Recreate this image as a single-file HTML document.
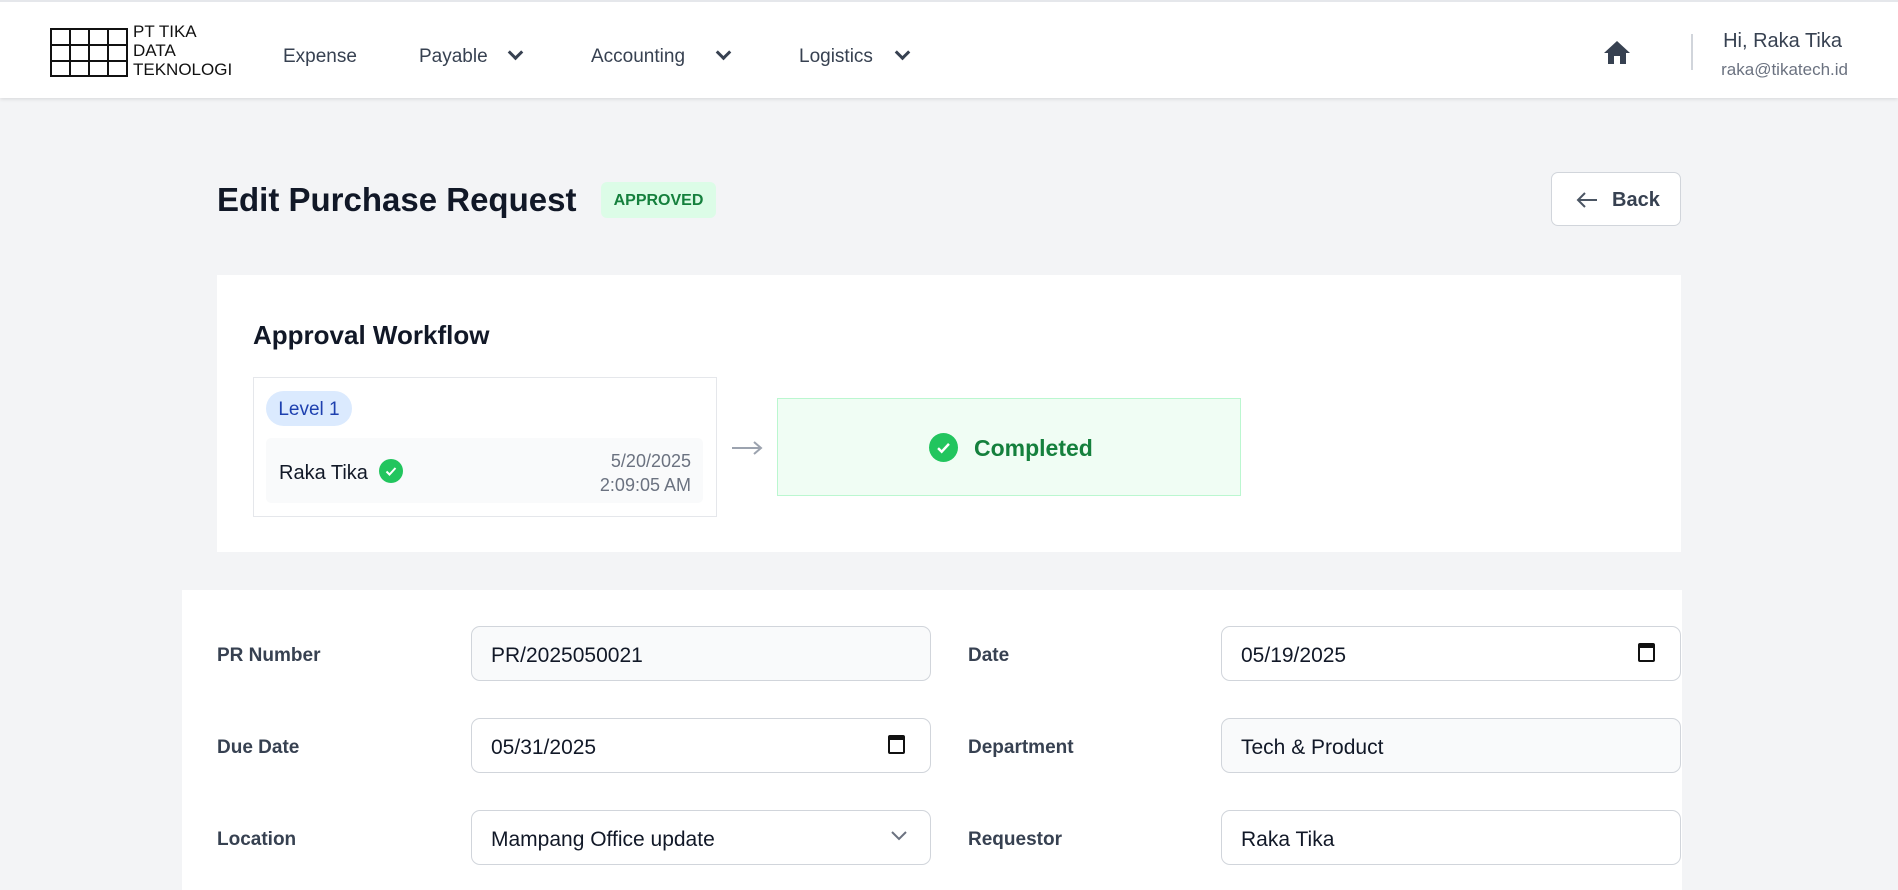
<!DOCTYPE html>
<html><head><style>
*{box-sizing:border-box;margin:0;padding:0}
body{width:1898px;height:879px;overflow:hidden;background:#f3f4f6;font-family:"Liberation Sans",sans-serif;position:relative;color:#111827}
.a{position:absolute}
.hdr{left:0;top:0;width:1898px;height:98px;background:#fff;border-top:2px solid #e5e7eb;box-shadow:0 1px 4px rgba(0,0,0,.12)}
.nav{font-size:19px;color:#374151;top:46px}
.chev{width:11px;height:11px;border-right:3px solid #374151;border-bottom:3px solid #374151;transform:rotate(45deg)}
.card{background:#fff}
.lbl{font-size:19px;font-weight:bold;color:#374151}
.inp{height:55px;border:1px solid #d1d5db;border-radius:9px;background:#fff;font-size:21px;color:#111827;padding-left:19px;line-height:57px}
.dis{background:#f9fafb}
.cal{width:17px;height:19px;border:2.5px solid #111;border-top-width:5px;border-radius:2px}
</style></head><body>
<div class="a hdr"></div>
<svg class="a" style="left:50px;top:28px" width="78" height="49" viewBox="0 0 78 49"><g fill="none" stroke="#111" stroke-width="2"><rect x="1" y="1" width="76" height="47"/><line x1="1" y1="17" x2="77" y2="17"/><line x1="1" y1="33" x2="77" y2="33"/><line x1="20" y1="1" x2="20" y2="48"/><line x1="39" y1="1" x2="39" y2="48"/><line x1="58" y1="1" x2="58" y2="48"/></g></svg>
<div class="a" style="left:133px;top:22px;font-size:17px;line-height:19px;color:#111">PT TIKA<br>DATA<br>TEKNOLOGI</div>
<div class="a nav" style="left:283px">Expense</div>
<div class="a nav" style="left:419px">Payable</div><div class="a chev" style="left:510px;top:47px"></div>
<div class="a nav" style="left:591px">Accounting</div><div class="a chev" style="left:718px;top:47px"></div>
<div class="a nav" style="left:799px">Logistics</div><div class="a chev" style="left:897px;top:47px"></div>
<svg class="a" style="left:1603px;top:40px" width="28" height="25" viewBox="0 0 28 25"><path d="M14 1 L27 13 H23 V24 H17 V16 H11 V24 H5 V13 H1 Z" fill="#374151"/></svg>
<div class="a" style="left:1691px;top:34px;width:2px;height:36px;background:#d1d5db"></div>
<div class="a" style="left:1690px;top:30px;width:152px;text-align:right;font-size:20px;color:#374151">Hi, Raka Tika</div>
<div class="a" style="left:1690px;top:60px;width:158px;text-align:right;font-size:17px;color:#6b7280">raka@tikatech.id</div>

<div class="a" style="left:217px;top:181px;font-size:33px;font-weight:bold;color:#111827">Edit Purchase Request</div>
<div class="a" style="left:601px;top:182px;width:115px;height:36px;background:#dcfce7;border-radius:6px;color:#15803d;font-size:16px;font-weight:bold;text-align:center;line-height:37px">APPROVED</div>
<div class="a" style="left:1551px;top:172px;width:130px;height:54px;background:#fff;border:1px solid #d1d5db;border-radius:7px"></div>
<svg class="a" style="left:1576px;top:192px" width="22" height="16" viewBox="0 0 22 16"><path d="M21 8 H2 M9 1 L2 8 L9 15" fill="none" stroke="#4b5563" stroke-width="2"/></svg>
<div class="a" style="left:1612px;top:189px;font-size:20px;font-weight:bold;color:#374151">Back</div>

<div class="a card" style="left:217px;top:275px;width:1464px;height:277px"></div>
<div class="a" style="left:253px;top:320px;font-size:26px;font-weight:bold;color:#111827">Approval Workflow</div>
<div class="a" style="left:253px;top:377px;width:464px;height:140px;border:1px solid #e5e7eb;background:#fff"></div>
<div class="a" style="left:266px;top:391px;width:86px;height:35px;border-radius:18px;background:#dbeafe;color:#1e40af;font-size:19px;line-height:38px;text-align:center">Level 1</div>
<div class="a" style="left:266px;top:438px;width:437px;height:65px;border-radius:5px;background:#f9fafb"></div>
<div class="a" style="left:279px;top:462px;font-size:20px;color:#111827">Raka Tika</div>
<svg class="a" style="left:379px;top:459px" width="24" height="24" viewBox="0 0 24 24"><circle cx="12" cy="12" r="12" fill="#22c55e"/><path d="M7.5 12.5 L10.5 15.5 L16.5 9" fill="none" stroke="#fff" stroke-width="2"/></svg>
<div class="a" style="left:540px;top:449px;width:151px;text-align:right;font-size:18px;line-height:24px;color:#6b7280">5/20/2025<br>2:09:05 AM</div>
<svg class="a" style="left:731px;top:440px" width="32" height="16" viewBox="0 0 32 16"><path d="M1 8 H30 M23 2 L30 8 L23 14" fill="none" stroke="#9ca3af" stroke-width="2"/></svg>
<div class="a" style="left:777px;top:398px;width:464px;height:98px;background:#f0fdf4;border:1px solid #bbf7d0"></div>
<svg class="a" style="left:929px;top:433px" width="29" height="29" viewBox="0 0 24 24"><circle cx="12" cy="12" r="12" fill="#22c55e"/><path d="M7.5 12.5 L10.5 15.5 L16.5 9" fill="none" stroke="#fff" stroke-width="2"/></svg>
<div class="a" style="left:974px;top:435px;font-size:23px;font-weight:bold;color:#15803d">Completed</div>

<div class="a card" style="left:182px;top:590px;width:1500px;height:300px"></div>
<div class="a lbl" style="left:217px;top:645px">PR Number</div>
<div class="a lbl" style="left:217px;top:737px">Due Date</div>
<div class="a lbl" style="left:217px;top:829px">Location</div>
<div class="a lbl" style="left:968px;top:645px">Date</div>
<div class="a lbl" style="left:968px;top:737px">Department</div>
<div class="a lbl" style="left:968px;top:829px">Requestor</div>
<div class="a inp dis" style="left:471px;top:626px;width:460px">PR/2025050021</div>
<div class="a inp" style="left:471px;top:718px;width:460px">05/31/2025</div>
<div class="a cal" style="left:888px;top:735px"></div>
<div class="a inp" style="left:471px;top:810px;width:460px">Mampang Office update</div>
<svg class="a" style="left:890px;top:830px" width="18" height="12" viewBox="0 0 18 12"><path d="M2 2 L9 9 L16 2" fill="none" stroke="#6b7280" stroke-width="2"/></svg>
<div class="a inp" style="left:1221px;top:626px;width:460px">05/19/2025</div>
<div class="a cal" style="left:1638px;top:643px"></div>
<div class="a inp dis" style="left:1221px;top:718px;width:460px">Tech &amp; Product</div>
<div class="a inp" style="left:1221px;top:810px;width:460px">Raka Tika</div>
</body></html>
